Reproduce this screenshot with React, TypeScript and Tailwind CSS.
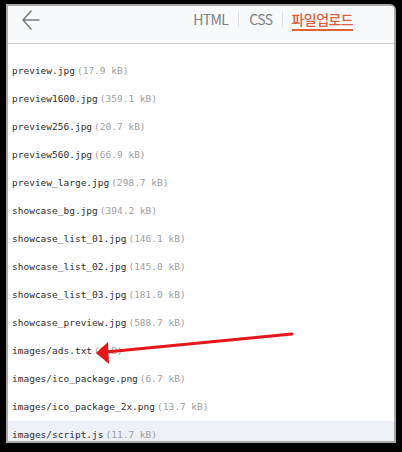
import React from "react"

type FileRow = { name: string; size: string }

const files: FileRow[] = [
  { name: "preview.jpg", size: "17.9 kB" },
  { name: "preview1600.jpg", size: "359.1 kB" },
  { name: "preview256.jpg", size: "20.7 kB" },
  { name: "preview560.jpg", size: "66.9 kB" },
  { name: "preview_large.jpg", size: "298.7 kB" },
  { name: "showcase_bg.jpg", size: "394.2 kB" },
  { name: "showcase_list_01.jpg", size: "146.1 kB" },
  { name: "showcase_list_02.jpg", size: "145.0 kB" },
  { name: "showcase_list_03.jpg", size: "181.0 kB" },
  { name: "showcase_preview.jpg", size: "588.7 kB" },
  { name: "images/ads.txt", size: "0 B" },
  { name: "images/ico_package.png", size: "6.7 kB" },
  { name: "images/ico_package_2x.png", size: "13.7 kB" },
  { name: "images/script.js", size: "11.7 kB" },
]

function BackArrow() {
  return (
    <svg width="20" height="22" viewBox="0 0 20 22" fill="none">
      <path d="M2 11H18M10 2L2 11L10 20" stroke="#7a7a7a" strokeWidth="1.6" strokeLinecap="round" strokeLinejoin="round" />
    </svg>
  )
}

function Header() {
  return (
    <div className="h-[38px] bg-[#f7f9fb] border-b border-[#c9cdd3] flex justify-between items-start" style={{ fontFamily: '"Noto Sans CJK KR", "Noto Sans", sans-serif' }}>
      <div className="pl-[13px] pt-[3px]">
        <BackArrow />
      </div>
      <div className="flex items-start pt-[3px] pr-[41px] text-[14px] tracking-[-0.6px] leading-[20px]">
        <span className="text-[#7b7f86]">HTML</span>
        <span className="w-px h-[15px] bg-[#dcdfe3] mx-[10px] mt-[3px]" />
        <span className="text-[#7b7f86]">CSS</span>
        <span className="w-px h-[15px] bg-[#dcdfe3] mx-[9px] mt-[3px]" />
        <span className="text-[#e0603c] font-medium border-b-2 border-[#e0603c] pb-[0px]">파일업로드</span>
      </div>
    </div>
  )
}

function FileList() {
  return (
    <div className="pt-[13px]" style={{ fontFamily: '"DejaVu Sans Mono", "Liberation Mono", monospace' }}>
      {files.map((f, i) => (
        <div
          key={f.name}
          className={
            "h-[28px] flex items-center pl-[4px] text-[9.5px] " +
            (i === files.length - 1 ? "bg-[#eef0f8]" : "")
          }
        >
          <span className="text-[#2e2e2e]">{f.name}</span>
          <span className="text-[#a0a0a0] ml-[2px]">({f.size})</span>
        </div>
      ))}
    </div>
  )
}

export default function App() {
  return (
    <div className="w-[402px] h-[452px] bg-black relative overflow-hidden">
      <div className="absolute left-[8px] top-[6px] w-[386px] h-[435px] bg-white overflow-hidden rounded-tr-[4px] shadow-[0_0_0_2px_#a8a8a8]">
        <Header />
        <FileList />
      </div>
      <svg className="absolute left-0 top-0" width="402" height="452" viewBox="0 0 402 452">
        <path d="M292 334L106 352" stroke="#e5151b" strokeWidth="3" strokeLinecap="round" />
        <path d="M96 353L108 342L109 364Z" fill="#e5151b" />
      </svg>
    </div>
  )
}
